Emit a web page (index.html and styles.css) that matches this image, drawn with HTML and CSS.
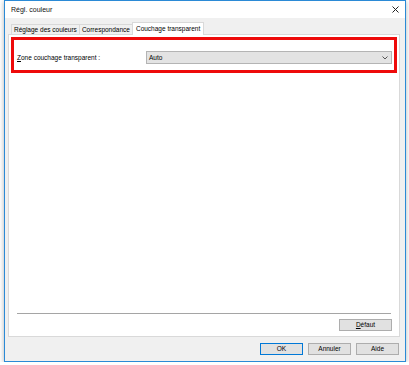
FILE: index.html
```html
<!DOCTYPE html>
<html lang="fr">
  <head>
    <meta charset="UTF-8" />
    <meta name="viewport" content="width=device-width, initial-scale=1.0" />
    <title>Régl. couleur</title>
    <link rel="stylesheet" href="styles.css">
  </head>
  <body>
    <div class="window">
      <div class="titlebar">
        <span class="title">Régl. couleur</span>
        <svg class="close" width="7" height="7" viewBox="0 0 7 7">
          <path d="M0.5 0.5 L6.5 6.5 M6.5 0.5 L0.5 6.5" stroke="#222" stroke-width="1" fill="none" />
        </svg>
      </div>
      <div class="content">
        <div class="tabs">
          <div class="tab">Réglage des couleurs</div>
          <div class="tab">Correspondance</div>
          <div class="tab active">Couchage transparent</div>
        </div>
        <div class="panel">
          <div class="highlight">
            <label class="field-label" for="zone"><u>Z</u>one couchage transparent :</label>
            <div class="select" id="zone">
              <span>Auto</span>
              <svg width="6" height="4" viewBox="0 0 6 4">
                <path d="M0.5 0.5 L3 3 L5.5 0.5" stroke="#555" stroke-width="1" fill="none" />
              </svg>
            </div>
          </div>
          <div class="spacer"></div>
          <hr class="separator" />
          <div class="panel-actions">
            <button class="btn btn-default"><u>D</u>éfaut</button>
          </div>
        </div>
        <div class="footer">
          <button class="btn primary">OK</button>
          <button class="btn">Annuler</button>
          <button class="btn">Aide</button>
        </div>
      </div>
    </div>
  </body>
</html>
```

FILE: styles.css
```css
html {
  height: 100%;
}
body {
  margin: 0;
  background: #ffffff;
  font-family: "Liberation Sans", Arial, sans-serif;
  font-size: 6.5px;
  color: #000;
}

.window {
  margin-left: 4px;
  width: 402px;
  height: 362px;
  box-sizing: border-box;
  border: 1px solid #2b8ad6;
  background: #f0f0f0;
  box-shadow: 0 1px 5px rgba(0, 0, 0, 0.3);
  display: flex;
  flex-direction: column;
}

.titlebar {
  height: 17px;
  flex: none;
  background: #ffffff;
  display: flex;
  align-items: center;
  justify-content: space-between;
  padding: 0 6px 0 6px;
}
.title {
  font-size: 7px;
  color: #111;
}

.content {
  flex: 1;
  display: flex;
  flex-direction: column;
  padding: 4px 5px 6px 3px;
}

.tabs {
  height: 12px;
  display: flex;
  align-items: flex-end;
  padding-left: 3px;
  position: relative;
  z-index: 1;
}
.tab {
  height: 10px;
  box-sizing: border-box;
  border: 1px solid #d9d9d9;
  border-bottom: none;
  margin-right: -1px;
  padding: 0 2px;
  line-height: 9px;
  background: #f0f0f0;
  white-space: nowrap;
}
.tab.active {
  height: 13px;
  margin-bottom: -1px;
  padding: 1px 3px 0;
  background: #ffffff;
}

.panel {
  height: 303px;
  box-sizing: border-box;
  border: 1px solid #d9d9d9;
  background: #ffffff;
  display: flex;
  flex-direction: column;
}

.highlight {
  margin: 2px 2px 0 2px;
  height: 36px;
  box-sizing: border-box;
  border: 3px solid #ee0a0a;
  display: flex;
  align-items: flex-end;
  padding: 0 2px 6px 3px;
}
.field-label {
  width: 129px;
  line-height: 13px;
}
.select {
  flex: 1;
  height: 13px;
  box-sizing: border-box;
  border: 1px solid #b4b4b4;
  background: #e3e3e3;
  display: flex;
  align-items: center;
  justify-content: space-between;
  padding: 0 3px 0 2px;
}

.spacer {
  flex: 1;
}

.separator {
  margin: 0 8px;
  border: none;
  border-top: 1px solid #a5a5a5;
  height: 0;
}

.panel-actions {
  display: flex;
  justify-content: flex-end;
  padding: 5px 7px 5px 0;
}

.btn {
  width: 43px;
  height: 12px;
  box-sizing: border-box;
  border: 1px solid #adadad;
  background: #e1e1e1;
  font-family: inherit;
  font-size: 6.5px;
  color: #000;
  padding: 0;
  line-height: 10px;
}
.btn-default {
  width: 53px;
}
.btn.primary {
  border-color: #0078d7;
}

.footer {
  margin-top: 6px;
  display: flex;
  justify-content: flex-end;
  gap: 5px;
  padding-right: 1px;
}
```
